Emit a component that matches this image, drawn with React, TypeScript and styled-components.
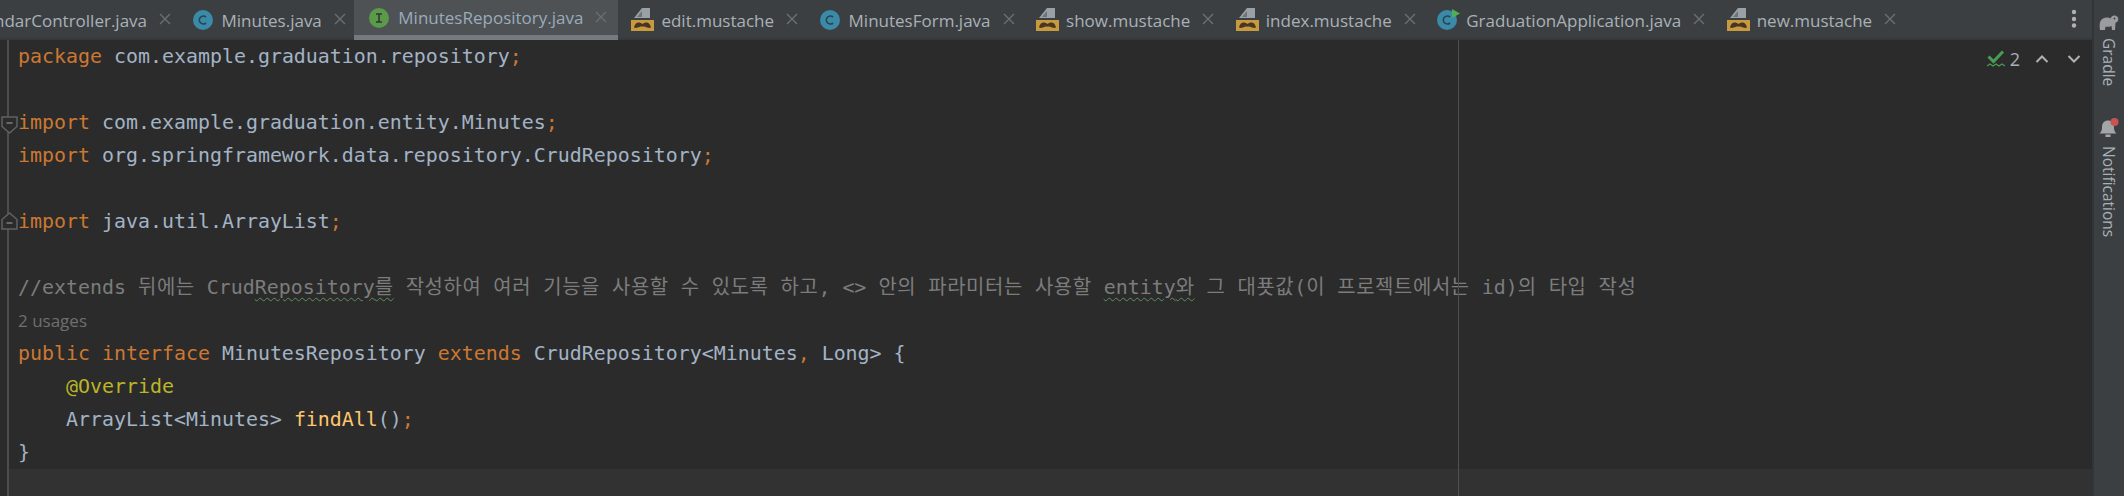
import React from "react";
import styled, { createGlobalStyle } from "styled-components";

const GlobalStyle = createGlobalStyle`
    html, body {
        margin: 0;
        padding: 0;
        background: #2b2b2b;
        overflow: hidden;
    }
`;

const Page = styled.div`
    display: flex;
    width: 2124px;
    height: 496px;
    overflow: hidden;
`;

const Main = styled.div`
    flex: 1;
    min-width: 0;
    display: flex;
    flex-direction: column;
`;

const TabBar = styled.div`
    display: flex;
    height: 40px;
    flex: none;
    background: linear-gradient(#3c3f41 38px, #36393b 38px);
    position: relative;
    overflow: hidden;
`;

const TabStrip = styled.div`
    display: flex;
    margin-left: -82px;
`;

const Tab = styled.div<{ $active?: boolean }>`
    display: flex;
    align-items: center;
    box-sizing: border-box;
    white-space: nowrap;
    background: ${(p) => (p.$active ? "#4e5254" : "transparent")};
    height: ${(p) => (p.$active ? 40 : 38)}px;
    padding: 0 ${(p) => (p.$active ? 11 : 8.5)}px ${(p) => (p.$active ? 2 : 0)}px ${(p) => (p.$active ? 15 : 13)}px;
    border-bottom: ${(p) => (p.$active ? "5px solid #747a80" : "none")};
    font-family: "Open Sans", "Noto Sans", sans-serif;
    font-size: 17px;
    color: ${(p) => (p.$active ? "#9aabbd" : "#a9b1b8")};
`;

const TabName = styled.span`
    padding-top: 2px;
`;

const TabIcon = styled.svg<{ $gap: number }>`
    flex: none;
    margin-right: ${(p) => p.$gap}px;
`;

const CloseMark = styled.svg`
    flex: none;
    margin-left: 12px;
`;

const MoreDots = styled.svg`
    position: absolute;
    right: 15px;
    top: 9px;
`;

const Editor = styled.div`
    flex: 1;
    min-height: 0;
    background: #2b2b2b;
    position: relative;
    padding-left: 18px;
    font-family: "DejaVu Sans Mono", "Noto Sans CJK KR", monospace;
    font-size: 19.93px;
    color: #a3b3c6;
    white-space: pre;
    &::before {
        content: "";
        position: absolute;
        left: 7px;
        top: 0;
        bottom: 0;
        width: 2px;
        background: #4b4d4e;
    }
`;

const Line = styled.div`
    height: 33px;
    line-height: 33px;
`;

const CaretLine = styled(Line)`
    margin-left: -9px;
    background: #323232;
`;

const Margin = styled.div`
    position: absolute;
    left: 1458px;
    top: 0;
    bottom: 0;
    width: 1px;
    background: #4f4f4f;
`;

const Keyword = styled.span`
    color: #cc7832;
`;

const Annotation = styled.span`
    color: #bbb529;
`;

const Method = styled.span`
    color: #ffc66d;
`;

const Comment = styled.span`
    color: #7c7c7c;
`;

const Hangul = styled.span`
    letter-spacing: 0.6px;
`;

const Typo = styled.span`
    text-decoration: underline wavy #5f8f5f 1px;
    text-underline-offset: 3px;
`;

const Usages = styled(Line)`
    font-family: "Open Sans", "Noto Sans", sans-serif;
    font-size: 17px;
    color: #6f6f6f;
`;

const FoldMark = styled.svg<{ $top: number }>`
    position: absolute;
    left: 1px;
    top: ${(p) => p.$top}px;
`;

const Inspection = styled.div`
    position: absolute;
    top: 10px;
    right: 11px;
    height: 18px;
    display: flex;
    align-items: center;
    font-family: "Open Sans", "Noto Sans", sans-serif;
    font-size: 18px;
    color: #a9b1b8;
`;

const Count = styled.span`
    margin-left: 5px;
`;

const Chevron = styled.svg<{ $gap: number }>`
    margin-left: ${(p) => p.$gap}px;
`;

const SideBar = styled.div`
    width: 30px;
    flex: none;
    background: #3c3f41;
    border-left: 2px solid #323537;
    display: flex;
    flex-direction: column;
    align-items: center;
`;

const SideItem = styled.div<{ $top: number }>`
    display: flex;
    flex-direction: column;
    align-items: center;
    padding-top: ${(p) => p.$top}px;
`;

const SideLabel = styled.div`
    writing-mode: vertical-rl;
    font-family: "Open Sans", "Noto Sans", sans-serif;
    font-size: 15.5px;
    line-height: 20px;
    color: #a9b1b8;
    margin-top: 8px;
`;

function CloseIcon() {
    return <CloseMark width="12" height="12" viewBox="0 0 12 12">
        <path d="M1 1 L11 11 M11 1 L1 11" stroke="#6b6f72" strokeWidth="1.4" fill="none"/>
    </CloseMark>;
}

function JavaIcon(props: { letter: string; fill: string; run?: boolean }) {
    return <TabIcon $gap={props.run ? 6 : 9} width={props.run ? 23 : 20} height="22" viewBox={props.run ? "0 0 23 22" : "0 0 20 22"}>
        <circle cx="10" cy="12" r="10" fill={props.fill}/>
        {props.letter === "I"
            ? <path d="M7 8 H13 M10 8 V16 M7 16 H13" stroke="#2f3a2b" strokeWidth="1.6" fill="none"/>
            : <path d="M13 9 A4 4 0 1 0 13 15" stroke="#264653" strokeWidth="1.7" fill="none"/>}
        {props.run ? <path d="M15 1 L23 5.5 L15 10 Z" fill="#4fae58"/> : null}
    </TabIcon>;
}

function MustacheIcon() {
    return <TabIcon $gap={7} width="23" height="23" viewBox="0 0 23 23">
        <path d="M3 10 L11 0 H19 V10 Z" fill="#9aa1a6"/>
        <path d="M6 9 L11 3 V9 Z" fill="#6d7478"/>
        <rect x="0" y="12" width="23" height="11" fill="#c79a3e"/>
        <path d="M3 19.5 C3.5 16 6 14 8.5 14.5 C10 15 11 15.5 11.5 16 C12 15.5 13 15 14.5 14.5 C17 14 19.5 16 20 19.5 C18 20.5 16 19.5 14 18.8 C13 18.4 12 18.4 11.5 18.8 C11 18.4 10 18.4 9 18.8 C7 19.5 5 20.5 3 19.5 Z" fill="#4a3524"/>
    </TabIcon>;
}

const tabs = [
    { name: "CalendarController.java", kind: "c" },
    { name: "Minutes.java", kind: "c" },
    { name: "MinutesRepository.java", kind: "i", active: true },
    { name: "edit.mustache", kind: "m" },
    { name: "MinutesForm.java", kind: "c" },
    { name: "show.mustache", kind: "m" },
    { name: "index.mustache", kind: "m" },
    { name: "GraduationApplication.java", kind: "r" },
    { name: "new.mustache", kind: "m" },
];

// hangul runs are a bit wider than the fallback font gives them
function kr(text: string) {
    return text.split(/([가-힣]+)/).map((part, index) =>
        index % 2 ? <Hangul key={index}>{part}</Hangul> : part);
}

function App() {
    return <Page>
        <GlobalStyle/>
        <Main>
            <TabBar>
                <TabStrip>
                    {tabs.map((tab) => <Tab key={tab.name} $active={tab.active}>
                        {tab.kind === "m" ? <MustacheIcon/>
                            : tab.kind === "i" ? <JavaIcon letter="I" fill="#5a9a4a"/>
                                : <JavaIcon letter="C" fill="#3a8aa8" run={tab.kind === "r"}/>}
                        <TabName>{tab.name}</TabName>
                        <CloseIcon/>
                    </Tab>)}
                </TabStrip>
                <MoreDots width="6" height="20" viewBox="0 0 6 20">
                    <circle cx="3" cy="3" r="2.2" fill="#afb1b3"/>
                    <circle cx="3" cy="10" r="2.2" fill="#afb1b3"/>
                    <circle cx="3" cy="16.5" r="2.2" fill="#afb1b3"/>
                </MoreDots>
            </TabBar>
            <Editor>
                <Margin/>
                <FoldMark $top={76} width="17" height="18" viewBox="0 0 17 18">
                    <path d="M1 1 H16 V10.5 L8.5 17 L1 10.5 Z" fill="#2b2b2b" stroke="#5f6163" strokeWidth="1.5"/>
                    <path d="M5.5 7 H11.5" stroke="#7c7e80" strokeWidth="1.5"/>
                </FoldMark>
                <FoldMark $top={172} width="17" height="18" viewBox="0 0 17 18">
                    <path d="M1 17 H16 V7.5 L8.5 1 L1 7.5 Z" fill="#2b2b2b" stroke="#5f6163" strokeWidth="1.5"/>
                    <path d="M5.5 11 H11.5" stroke="#7c7e80" strokeWidth="1.5"/>
                </FoldMark>
                <Inspection>
                    <svg width="18" height="18" viewBox="0 0 18 18">
                        <path d="M1.5 6.5 L6.5 11.5 L16 1.5" stroke="#499c54" strokeWidth="3" fill="none"/>
                        <path d="M0 16 L3 14 L6 16 L9 14 L12 16 L15 14 L18 16" stroke="#499c54" strokeWidth="1.2" fill="none"/>
                    </svg>
                    <Count>2</Count>
                    <Chevron $gap={15} width="14" height="10" viewBox="0 0 14 10">
                        <path d="M1.5 8 L7 2.5 L12.5 8" stroke="#afb1b3" strokeWidth="2" fill="none"/>
                    </Chevron>
                    <Chevron $gap={18} width="14" height="10" viewBox="0 0 14 10">
                        <path d="M1.5 2 L7 7.5 L12.5 2" stroke="#afb1b3" strokeWidth="2" fill="none"/>
                    </Chevron>
                </Inspection>
                <Line><Keyword>package</Keyword> com.example.graduation.repository<Keyword>;</Keyword></Line>
                <Line> </Line>
                <Line><Keyword>import</Keyword> com.example.graduation.entity.Minutes<Keyword>;</Keyword></Line>
                <Line><Keyword>import</Keyword> org.springframework.data.repository.CrudRepository<Keyword>;</Keyword></Line>
                <Line> </Line>
                <Line><Keyword>import</Keyword> java.util.ArrayList<Keyword>;</Keyword></Line>
                <Line> </Line>
                <Line><Comment>{kr("//extends 뒤에는 Crud")}<Typo>{kr("Repository를")}</Typo>{kr(" 작성하여 여러 기능을 사용할 수 있도록 하고, <> 안의 파라미터는 사용할 ")}<Typo>{kr("entity와")}</Typo>{kr(" 그 대푯값(이 프로젝트에서는 id)의 타입 작성")}</Comment></Line>
                <Usages>2 usages</Usages>
                <Line><Keyword>public interface</Keyword> MinutesRepository <Keyword>extends</Keyword> CrudRepository&lt;Minutes<Keyword>,</Keyword> Long&gt; {"{"}</Line>
                <Line>    <Annotation>@Override</Annotation></Line>
                <Line>    ArrayList&lt;Minutes&gt; <Method>findAll</Method>()<Keyword>;</Keyword></Line>
                <Line>{"}"}</Line>
                <CaretLine> </CaretLine>
            </Editor>
        </Main>
        <SideBar>
            <SideItem $top={15}>
                <svg width="20" height="15" viewBox="0 0 20 15">
                    <path d="M1 15 C0 9 1 5 4 3.5 C7 2 10 2.5 11.5 3.5 C12 1.5 14 0 16 0.5 C18.5 1 20 3 19 5.5 C18.5 7 17.5 7.5 16.5 7.5 L16 15 L13 15 L12.5 11 C10 12 8 12 6.5 11.5 L6 15 Z" fill="#9a9c9e"/>
                    <circle cx="15.5" cy="3.5" r="0.9" fill="#3c3f41"/>
                </svg>
                <SideLabel>Gradle</SideLabel>
            </SideItem>
            <SideItem $top={32}>
                <svg width="20" height="20" viewBox="0 0 20 20">
                    <path d="M0.5 15.5 C3 13.5 3 11 3 9 C3 5 5.5 2.5 9 2.5 C12.5 2.5 15 5 15 9 C15 11 15 13.5 17.5 15.5 Z" fill="#a3a5a7"/>
                    <rect x="6.5" y="16.5" width="5" height="2.5" fill="#a3a5a7"/>
                    <circle cx="15.5" cy="4" r="4" fill="#c75450"/>
                </svg>
                <SideLabel>Notifications</SideLabel>
            </SideItem>
        </SideBar>
    </Page>;
}

export default App;
